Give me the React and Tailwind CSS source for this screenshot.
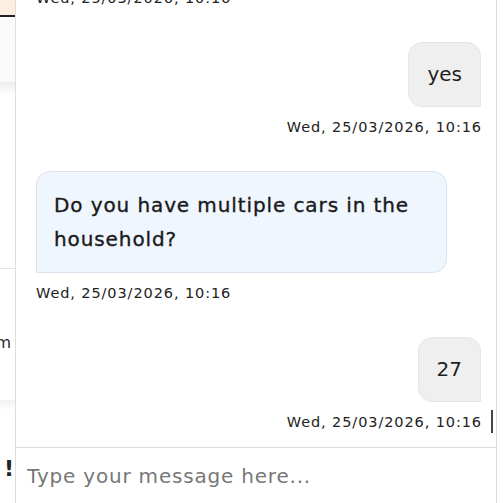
import React from "react"

const stamp = "Wed, 25/03/2026, 10:16";

function Stamp({ right }) {
    return (
        <div className={`mt-[10px] text-[14.5px] leading-[20px] tracking-[0.9px] text-[#222] ${right ? 'text-right -mr-[1px]' : ''}`}>
            {stamp}
        </div>
    );
}

function UserMsg({ text }) {
    return (
        <div className="flex flex-col items-end">
            <div className="rounded-[14px] rounded-br-none border border-[#e6e6e6] bg-[#efefef] px-[18px] py-[17px] text-[20px] leading-[29px] text-[#1f1f1f]">
                {text}
            </div>
            <Stamp right />
        </div>
    );
}

function BotMsg() {
    return (
        <div className="flex flex-col items-start">
            <div className="w-[411px] rounded-[14px] rounded-bl-none border border-[#dbe4ec] bg-[#eff6fd] px-[17px] py-[16px] text-[20px] leading-[34px] tracking-[0.9px] text-[#1a1a1a] [-webkit-text-stroke:0.35px_#1a1a1a]">
                Do you have multiple cars in the<br />household?
            </div>
            <Stamp />
        </div>
    );
}

function SideStrip() {
    return (
        <div className="flex w-[16px] shrink-0 flex-col overflow-hidden border-r border-[#dedede] bg-white">
            <div className="h-[15px] bg-[#fcefdf]" />
            <div className="h-[2px] w-[15px] bg-[#222]" />
            <div className="h-[65px] bg-[#fbfbfb]" />
            <div className="h-[13px] bg-gradient-to-b from-[#ececec] to-white" />
            <div className="h-[173px]" />
            <div className="h-px w-[15px] bg-[#e3e3e3]" />
            <div className="flex h-[84px] items-end justify-end pr-[4px] text-[16px] leading-[20px] text-[#2a2a2a] whitespace-nowrap">
                from
            </div>
            <div className="h-[47px]" />
            <div className="h-[10px] w-[15px] bg-gradient-to-b from-[#f2f2f2] to-white" />
            <div className="flex h-[72px] items-end justify-end pr-[1px] text-[22px] font-bold leading-[26px] text-[#222] whitespace-nowrap">
                r !
            </div>
        </div>
    );
}

export default function App() {
    return (
        <div className="flex h-[503px] w-[503px] overflow-hidden bg-white" style={{ fontFamily: "'DejaVu Sans', sans-serif" }}>
            <SideStrip />
            <div className="flex w-[481px] shrink-0 flex-col border-r border-[#dedede]">
                <div className="relative flex h-[447px] flex-col justify-end gap-[34px] overflow-hidden pb-[15px] pl-[20px] pr-[15px]">
                    <Stamp />
                    <UserMsg text="yes" />
                    <BotMsg />
                    <UserMsg text="27" />
                    <div className="absolute bottom-[14px] right-[3px] h-[23px] w-[2px] bg-[#444]" />
                </div>
                <div className="flex flex-1 items-center border-t border-[#dcdcdc] pl-[11px]">
                    <input className="w-full bg-transparent text-[20px] tracking-[0.8px] text-[#333] outline-none placeholder:text-[#777]" placeholder="Type your message here..." />
                </div>
            </div>
            <div className="flex-1" />
        </div>
    );
}
